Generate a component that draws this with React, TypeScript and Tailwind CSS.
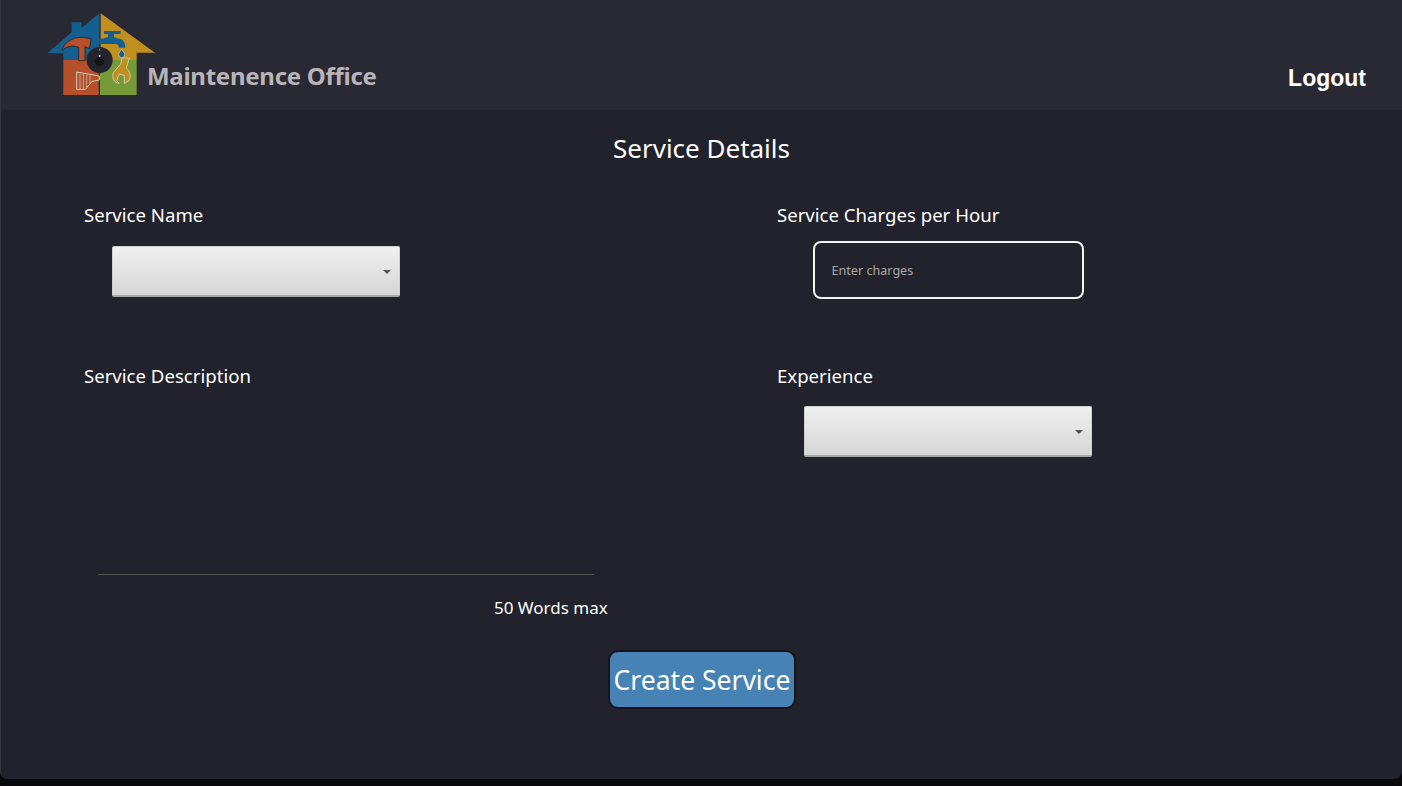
import React from "react";

const FONT = "font-['Noto_Sans','Open_Sans',sans-serif]";

function Logo() {
  return (
    <svg viewBox="51 30 330 270" className="w-[110px] h-[90px] shrink-0">
      <path d="M52 160 L125 97 L125 67 L155 67 L155 84 L208 40 L208 180 L100 180 L100 160 Z" fill="#145f8f" />
      <path d="M212 40 L375 158 L320 158 L320 180 L212 180 Z" fill="#c08f1e" />
      <path d="M100 180 L206 180 L206 285 L100 285 Z" fill="#b5502a" />
      <path d="M210 180 L320 180 L320 285 L210 285 Z" fill="#779a38" />
      {/* hammer */}
      <path d="M96 152 C100 130 125 112 155 112 L184 116 L178 146 L165 140 L165 182 L146 182 L146 142 C125 134 108 140 96 152 Z" fill="#b5502a" stroke="#1d2430" strokeWidth="2.5" />
      {/* faucet */}
      <path d="M222 93 L272 93 L272 102 L252 102 L252 112 L270 116 C282 120 286 130 286 143 L266 143 C266 134 262 132 254 132 L208 132 L208 118 L234 112 L234 102 L222 102 Z" fill="#145f8f" />
      <path d="M275 148 C281 156 284 160 284 164 A9 9 0 0 1 266 164 C266 160 269 156 275 148 Z" fill="#145f8f" stroke="#d8d8d8" strokeWidth="2" />
      {/* brush */}
      <path d="M140 216 L186 224 L208 228 L208 240 L186 244 L166 268 L140 268 Z" fill="#b5502a" stroke="#cfcfc4" strokeWidth="3" />
      <path d="M150 220 L150 266 M160 222 L160 266 M170 223 L170 262 M180 225 L180 250" stroke="#cfcfc4" strokeWidth="2" fill="none" />
      {/* wrench */}
      <path d="M276 174 L298 174 L289 204 C301 214 305 232 295 244 L283 250 L283 226 L268 222 L260 242 L268 250 C252 250 244 232 250 218 L272 192 Z" fill="#c08f1e" stroke="#d8d2bc" strokeWidth="2.5" />
      {/* lens */}
      <circle cx="209" cy="180" r="39" fill="#23242e" />
      <circle cx="209" cy="184" r="14" fill="#15161c" />
      <circle cx="209" cy="168" r="3" fill="#f0f0f0" />
      <path d="M209 146 L209 152" stroke="#d0d0d0" strokeWidth="2" />
    </svg>
  );
}

function FakeSelect({ className = "" }: { className?: string }) {
  return (
    <div className={`relative w-[288px] h-[51px] rounded-[2px] border border-[#cfcfcf] border-b-2 border-b-[#a9a9a9] bg-gradient-to-b from-[#f0f0f0] to-[#d6d6d6] ${className}`}>
      <span className="absolute right-[8px] top-[23px] w-0 h-0 border-x-[4px] border-x-transparent border-t-[4px] border-t-[#555555]" />
    </div>
  );
}

const LABEL = "text-[18.6px] leading-[26px] font-normal";

export default function App() {
  return (
    <div className={`w-full h-[786px] bg-[#0a0a0c] ${FONT}`}>
      <div className="h-[779px] bg-[#21222c] rounded-b-[8px] overflow-hidden border-l border-[#34353d] flex flex-col">
        <header className="h-[110px] bg-[#282933] flex items-start justify-between pl-[46px] pr-[36px]">
          <div className="flex items-start pt-[10px]">
            <Logo />
            <span className="ml-[-10px] mt-[49px] text-[24px] leading-[33px] font-bold text-[#b8b4b8] tracking-[-0.27px]">Maintenence Office</span>
          </div>
          <button className="mt-[64px] text-[23px] leading-[28px] font-bold text-white font-['Liberation_Sans',sans-serif]">Logout</button>
        </header>

        <main className="flex flex-col flex-1 text-white">
          <h1 className="mt-[20px] text-center text-[26px] leading-[36px] font-normal">Service Details</h1>

          <div className="mt-[36px] ml-[83px] grid grid-cols-[693px_342px]">
            <section className="w-[344px] flex flex-col items-center h-[161px]">
              <label className={`self-start ${LABEL}`}>Service Name</label>
              <FakeSelect className="mt-[18px]" />
            </section>
            <section className="w-[342px] flex flex-col items-center h-[161px]">
              <label className={`self-start ${LABEL}`}>Service Charges per Hour</label>
              <input
                placeholder="Enter charges"
                className="mt-[13px] w-[271px] h-[58px] rounded-[8px] border-2 border-[#f2f2f2] bg-transparent px-[17px] text-[12.6px] outline-none placeholder:text-[#a8a8a8]"
              />
            </section>
            <section className="w-[610px] flex flex-col">
              <label className={LABEL}>Service Description</label>
              <div className="mt-[185px] ml-[14px] w-[496px] h-px bg-[#4f5052]" />
              <p className="mt-[22px] self-end mr-[86px] text-[17px] leading-[22px] w-[114px] whitespace-nowrap">50 Words max</p>
            </section>
            <section className="w-[342px] flex flex-col items-center">
              <label className={`self-start ${LABEL}`}>Experience</label>
              <FakeSelect className="mt-[17px]" />
            </section>
          </div>

          <div className="mt-[31px] flex justify-center">
            <button className="ml-[1px] w-[188px] h-[59px] rounded-[10px] border-2 border-[#14151c] bg-[#4682b4] text-[26.5px] leading-[36px] text-white">Create Service</button>
          </div>
        </main>
      </div>
    </div>
  );
}
